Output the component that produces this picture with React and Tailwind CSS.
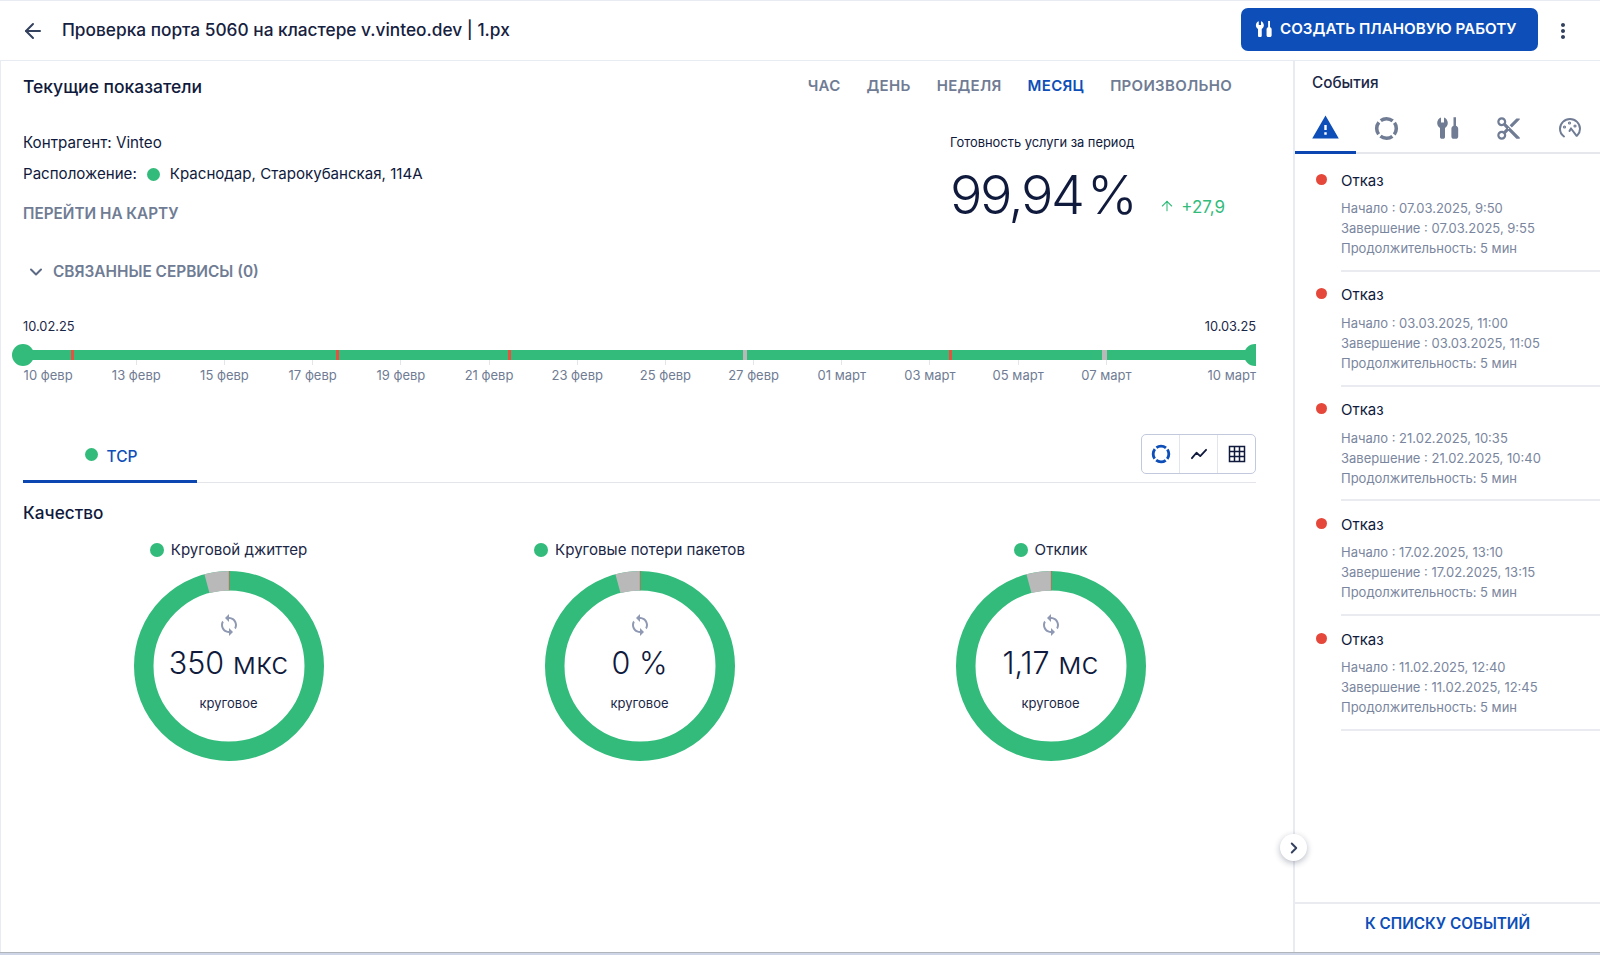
import React from "react";
import { ArrowLeft, ChevronDown, ChevronRight, ArrowUp } from "lucide-react";
import { MdMoreVert, MdWarning, MdContentCut, MdSync } from "react-icons/md";

const Tools = ({ className }) => (
  <svg viewBox="0 0 24 24" className={className} fill="currentColor">
    <path d="M5 1.5V6.5H8V1.5C10.2 2.2 11.8 4.4 11.8 7C11.8 9.2 10.6 11 9 12V21C9 22 8.2 22.8 7.2 22.8H5.8C4.8 22.8 4 22 4 21V12C2.4 11 1.2 9.2 1.2 7C1.2 4.4 2.8 2.2 5 1.5Z" />
    <path d="M17.5 1.2H20V9.8C21.4 10.3 22.2 11.4 22.2 12.8V20.4C22.2 21.8 21.1 22.8 19.8 22.8H17.8C16.4 22.8 15.4 21.8 15.4 20.4V12.8C15.4 11.4 16.2 10.3 17.5 9.8Z" />
  </svg>
);

const Ring = ({ className }) => (
  <svg viewBox="0 0 24 24" className={className} fill="none" stroke="currentColor" strokeWidth="3.4">
    <circle cx="12" cy="12" r="9.4" strokeDasharray="12.26 2.5" strokeDashoffset="-8.63" />
  </svg>
);

const Gauge = ({ className }) => (
  <svg viewBox="0 0 24 24" className={className} fill="none" stroke="currentColor" strokeWidth="2" strokeLinecap="round" strokeLinejoin="round">
    <path d="M6 20.5C3.6 18.8 2 16 2 12.8C2 7.4 6.5 3 12 3C17.5 3 22 7.4 22 12.8C22 15.4 21 17.7 19.3 19.4" />
    <path d="M13 12.5L18.6 19.8" />
    <path d="M13 12.5L11.5 15" />
    <circle cx="6.5" cy="11" r="0.6" />
    <circle cx="11.5" cy="7" r="0.6" />
    <circle cx="17" cy="10" r="0.6" />
  </svg>
);

const LineIcon = ({ className }) => (
  <svg viewBox="0 0 24 24" className={className} fill="none" stroke="currentColor" strokeWidth="2.2" strokeLinejoin="round" strokeLinecap="round">
    <path d="M3.5 17L9 10.5L13.5 14.5L20.5 7" />
  </svg>
);

const GridIcon = ({ className }) => (
  <svg viewBox="0 0 24 24" className={className} fill="none" stroke="currentColor" strokeWidth="1.8">
    <rect x="3" y="3" width="18" height="18" />
    <path d="M9 3V21M15 3V21M3 9H21M3 15H21" />
  </svg>
);

const ticks = ["10 февр", "13 февр", "15 февр", "17 февр", "19 февр", "21 февр", "23 февр", "25 февр", "27 февр", "01 март", "03 март", "05 март", "07 март"];

const events = [
  ["07.03.2025, 9:50", "07.03.2025, 9:55"],
  ["03.03.2025, 11:00", "03.03.2025, 11:05"],
  ["21.02.2025, 10:35", "21.02.2025, 10:40"],
  ["17.02.2025, 13:10", "17.02.2025, 13:15"],
  ["11.02.2025, 12:40", "11.02.2025, 12:45"],
];

const Donut = () => {
  const r = 85.25;
  const a = (-15 * Math.PI) / 180;
  const x = 95 + r * Math.sin(a);
  const y = 95 - r * Math.cos(a);
  return (
    <svg viewBox="0 0 190 190" className="absolute inset-0 h-[190px] w-[190px]" fill="none">
      <circle cx="95" cy="95" r={r} stroke="#33bb7b" strokeWidth="19.5" />
      <path d={`M${x} ${y}A${r} ${r} 0 0 1 95 ${95 - r}`} stroke="#b9b9b9" strokeWidth="19.5" />
      <path d="M95.2 0V19.5" stroke="#e0584a" strokeWidth="0.6" />
    </svg>
  );
};

const Metric = ({ title, value }) => (
  <div className="flex w-[411px] flex-col items-center">
    <div className="flex h-[22px] items-center gap-[7px] text-[15.1px] text-[#1b2747]">
      <span className="h-[14px] w-[14px] rounded-full bg-[#33bb7b]" />
      {title}
    </div>
    <div className="relative mt-[10px] h-[190px] w-[190px]">
      <Donut />
      <div className="absolute inset-0 flex flex-col items-center pt-[42px]">
        <MdSync className="h-[24px] w-[24px] text-[#8f99b3]" />
        <div className="mt-[8px] h-[36px] text-[30.5px] font-light leading-[36px] text-[#0f1a3c]">{value}</div>
        <div className="mt-[14px] h-[16px] text-[13px] leading-[16px] text-[#1b2747]">круговое</div>
      </div>
    </div>
  </div>
);

export default function App() {
  return (
    <div className="flex h-[955px] w-[1600px] flex-col overflow-hidden bg-white font-['Inter',sans-serif] text-[#0f1a3c]">
      <header className="flex h-[61px] shrink-0 items-center border-y border-[#e9ebf2] pl-[21px] pr-[25px]">
        <ArrowLeft className="h-[24px] w-[24px] text-[#33415f]" strokeWidth={2} />
        <h1 className="-mt-[1px] ml-[17px] text-[17.3px] font-medium text-[#16213f]">Проверка порта 5060 на кластере v.vinteo.dev | 1.px</h1>
        <button className="ml-auto -mt-[2px] flex h-[43px] w-[297px] items-center rounded-[7px] bg-[#0d4eb8] pb-[1px] pl-[14px] text-[15.2px] font-semibold text-white">
          <Tools className="h-[18px] w-[18px]" />
          <span className="ml-[7px]">СОЗДАТЬ ПЛАНОВУЮ РАБОТУ</span>
        </button>
        <MdMoreVert className="ml-[13px] h-[24px] w-[24px] text-[#33415f]" />
      </header>

      <div className="flex min-h-0 flex-1">
        <main className="w-[1293px] shrink-0 border-l border-[#e9ebf2] pl-[22px] pr-[37px]">
          <div className="flex h-[53px] items-center justify-between">
            <h2 className="text-[17.5px] font-medium">Текущие показатели</h2>
            <nav className="mb-[3px] mr-[24px] flex gap-[26px] text-[15px] font-semibold tracking-[0.3px] text-[#6f7c94]">
              <span>ЧАС</span>
              <span>ДЕНЬ</span>
              <span>НЕДЕЛЯ</span>
              <span className="text-[#0d4eb8]">МЕСЯЦ</span>
              <span>ПРОИЗВОЛЬНО</span>
            </nav>
          </div>

          <div className="flex justify-between">
            <div>
              <div className="mt-[18px] h-[22px] text-[15.2px] leading-[22px]">Контрагент: Vinteo</div>
              <div className="mt-[9.5px] flex h-[22px] items-center text-[15.1px]">
                Расположение:
                <span className="ml-[10px] h-[13px] w-[13px] rounded-full bg-[#33bb7b]" />
                <span className="ml-[10px]">Краснодар, Старокубанская, 114А</span>
              </div>
              <div className="mt-[17px] h-[22px] text-[15.3px] font-semibold leading-[22px] text-[#6f7c94]">ПЕРЕЙТИ НА КАРТУ</div>
              <div className="mt-[36.5px] flex h-[22px] items-center text-[15.4px] font-semibold text-[#6f7c94]">
                <ChevronDown className="ml-[3px] h-[20px] w-[20px] text-[#5c6a85]" strokeWidth={2.4} />
                <span className="ml-[7px]">СВЯЗАННЫЕ СЕРВИСЫ (0)</span>
              </div>
            </div>
            <div className="w-[306px] pt-[20px]">
              <div className="h-[18px] whitespace-nowrap text-[12.9px] leading-[18px]">Готовность услуги за период</div>
              <div className="mt-[10.5px] flex items-end whitespace-nowrap">
                <span className="text-[54px] font-light leading-[64px] tracking-[-2.5px] [word-spacing:-8px] text-[#0f1a3c]">99,94 %</span>
                <ArrowUp className="mb-[12.5px] ml-[24px] h-[16px] w-[16px] text-[#33bb7b]" strokeWidth={1.6} />
                <span className="mb-[8.5px] ml-[6px] text-[17px] leading-[22px] text-[#33bb7b]">+27,9</span>
              </div>
            </div>
          </div>

          <div className="mt-[36px] flex h-[16px] justify-between text-[12.8px] leading-[16px] text-[#1b2747]">
            <span>10.02.25</span>
            <span>10.03.25</span>
          </div>
          <svg viewBox="0 0 1245 22" className="-ml-[12px] mt-[8.5px] block h-[22px] w-[1245px]">
            <rect x="12" y="6" width="1233" height="10" fill="#33bb7b" />
            <circle cx="12" cy="11" r="11" fill="#33bb7b" />
            <circle cx="1244" cy="11" r="11" fill="#33bb7b" />
            <rect x="60" y="6" width="3" height="10" fill="#e8503f" />
            <rect x="325" y="6" width="3" height="10" fill="#e8503f" />
            <rect x="497" y="6" width="3" height="10" fill="#e8503f" />
            <rect x="938" y="6" width="3" height="10" fill="#e8503f" />
            <rect x="732" y="6" width="4" height="10" fill="#b9b9b9" />
            <rect x="1091" y="6" width="5" height="10" fill="#b9b9b9" />
          </svg>
          <div className="-mt-[6px] flex h-[24px] text-[13px] leading-[16px] text-[#6f7c94]">
            <div className="-ml-[19px] flex">
              {ticks.map((t, i) => (
                <div key={t} className="flex w-[88.2px] flex-col items-center">
                  <span className={i === 0 ? "h-[5px] w-px" : "h-[5px] w-px bg-[#e3e5ea]"} />
                  <span className="mt-[2.5px] whitespace-nowrap">{t}</span>
                </div>
              ))}
            </div>
            <span className="ml-auto mt-[7.5px] whitespace-nowrap">10 март</span>
          </div>

          <div className="relative mt-[50.5px] flex h-[49px] border-b border-[#e3e5ea]">
            <div className="-mb-px flex h-[49px] w-[174px] items-start justify-center border-b-[3px] border-[#0c46b0] pl-[2px] pt-[11px]">
              <span className="mr-[9px] mt-[3px] h-[13px] w-[13px] rounded-full bg-[#33bb7b]" />
              <span className="text-[15.5px] font-medium text-[#0d4eb8]">TCP</span>
            </div>
            <div className="ml-auto flex h-[40px] w-[115px] divide-x divide-[#e3e5ec] rounded-[5px] border border-[#c3c9dc] text-[#0f1a3c]">
              <div className="flex flex-1 items-center justify-center">
                <Ring className="h-[20px] w-[20px] text-[#0d4eb8]" />
              </div>
              <div className="flex flex-1 items-center justify-center">
                <LineIcon className="h-[20px] w-[20px]" />
              </div>
              <div className="flex flex-1 items-center justify-center">
                <GridIcon className="h-[20px] w-[20px]" />
              </div>
            </div>
          </div>

          <h3 className="mt-[17.5px] h-[24px] text-[17.2px] font-medium leading-[24px]">Качество</h3>
          <div className="mt-[14.5px] flex">
            <Metric title="Круговой джиттер" value="350 мкс" />
            <Metric title="Круговые потери пакетов" value="0 %" />
            <Metric title="Отклик" value="1,17 мс" />
          </div>
        </main>

        <aside className="relative flex min-w-0 flex-1 flex-col border-l-2 border-[#e9ebf2]">
          <div className="flex h-[45px] items-center pl-[17px] text-[15.3px] font-medium text-[#1b2747]">События</div>
          <div className="flex h-[48px] border-b-2 border-[#e5e7ec] text-[#6f7c94]">
            <div className="-mb-[2px] flex h-[48px] w-[61px] items-center justify-center border-b-[3px] border-[#0c46b0] pb-[3px] text-[#0d4eb8]">
              <MdWarning className="h-[29px] w-[29px]" />
            </div>
            <div className="flex h-[44px] w-[61px] items-center justify-center"><Ring className="h-[25px] w-[25px]" /></div>
            <div className="flex h-[44px] w-[61px] items-center justify-center"><Tools className="h-[24px] w-[24px]" /></div>
            <div className="flex h-[44px] w-[61px] items-center justify-center"><MdContentCut className="h-[27px] w-[27px]" /></div>
            <div className="flex h-[44px] w-[61px] items-center justify-center"><Gauge className="h-[24px] w-[24px]" /></div>
          </div>
          <div className="pt-[3px]">
            {events.map(([start, end], i) => (
              <div key={i} className="flex pl-[21px]">
                <span className="mt-[16.5px] h-[11px] w-[11px] shrink-0 rounded-full bg-[#e5483a]" />
                <div className="ml-[14px] flex-1 border-b-2 border-[#e9ebf0] pb-[11.8px] pt-[12.5px]">
                  <div className="h-[22px] text-[15px] leading-[22px]">Отказ</div>
                  <div className="mt-[6.5px] text-[13px] leading-[20px] text-[#7a869e]">
                    <div>Начало : {start}</div>
                    <div>Завершение : {end}</div>
                    <div>Продолжительность: 5 мин</div>
                  </div>
                </div>
              </div>
            ))}
          </div>
          <div className="mt-auto flex h-[50px] items-start justify-center border-t-2 border-[#e9ebf0] pt-[9px] text-[15.3px] font-semibold text-[#0d4eb8]">
            К СПИСКУ СОБЫТИЙ
          </div>
          <button className="absolute -left-[15px] top-[773px] flex h-[27px] w-[27px] items-center justify-center rounded-full bg-white shadow-[0_2px_6px_rgba(15,26,60,0.3)]">
            <ChevronRight className="h-[18px] w-[18px] text-[#33415f]" strokeWidth={2.6} />
          </button>
        </aside>
      </div>
      <div className="h-[3px] shrink-0 border-t border-[#b0b4bb] bg-[#cdd5e6]" />
    </div>
  );
}
